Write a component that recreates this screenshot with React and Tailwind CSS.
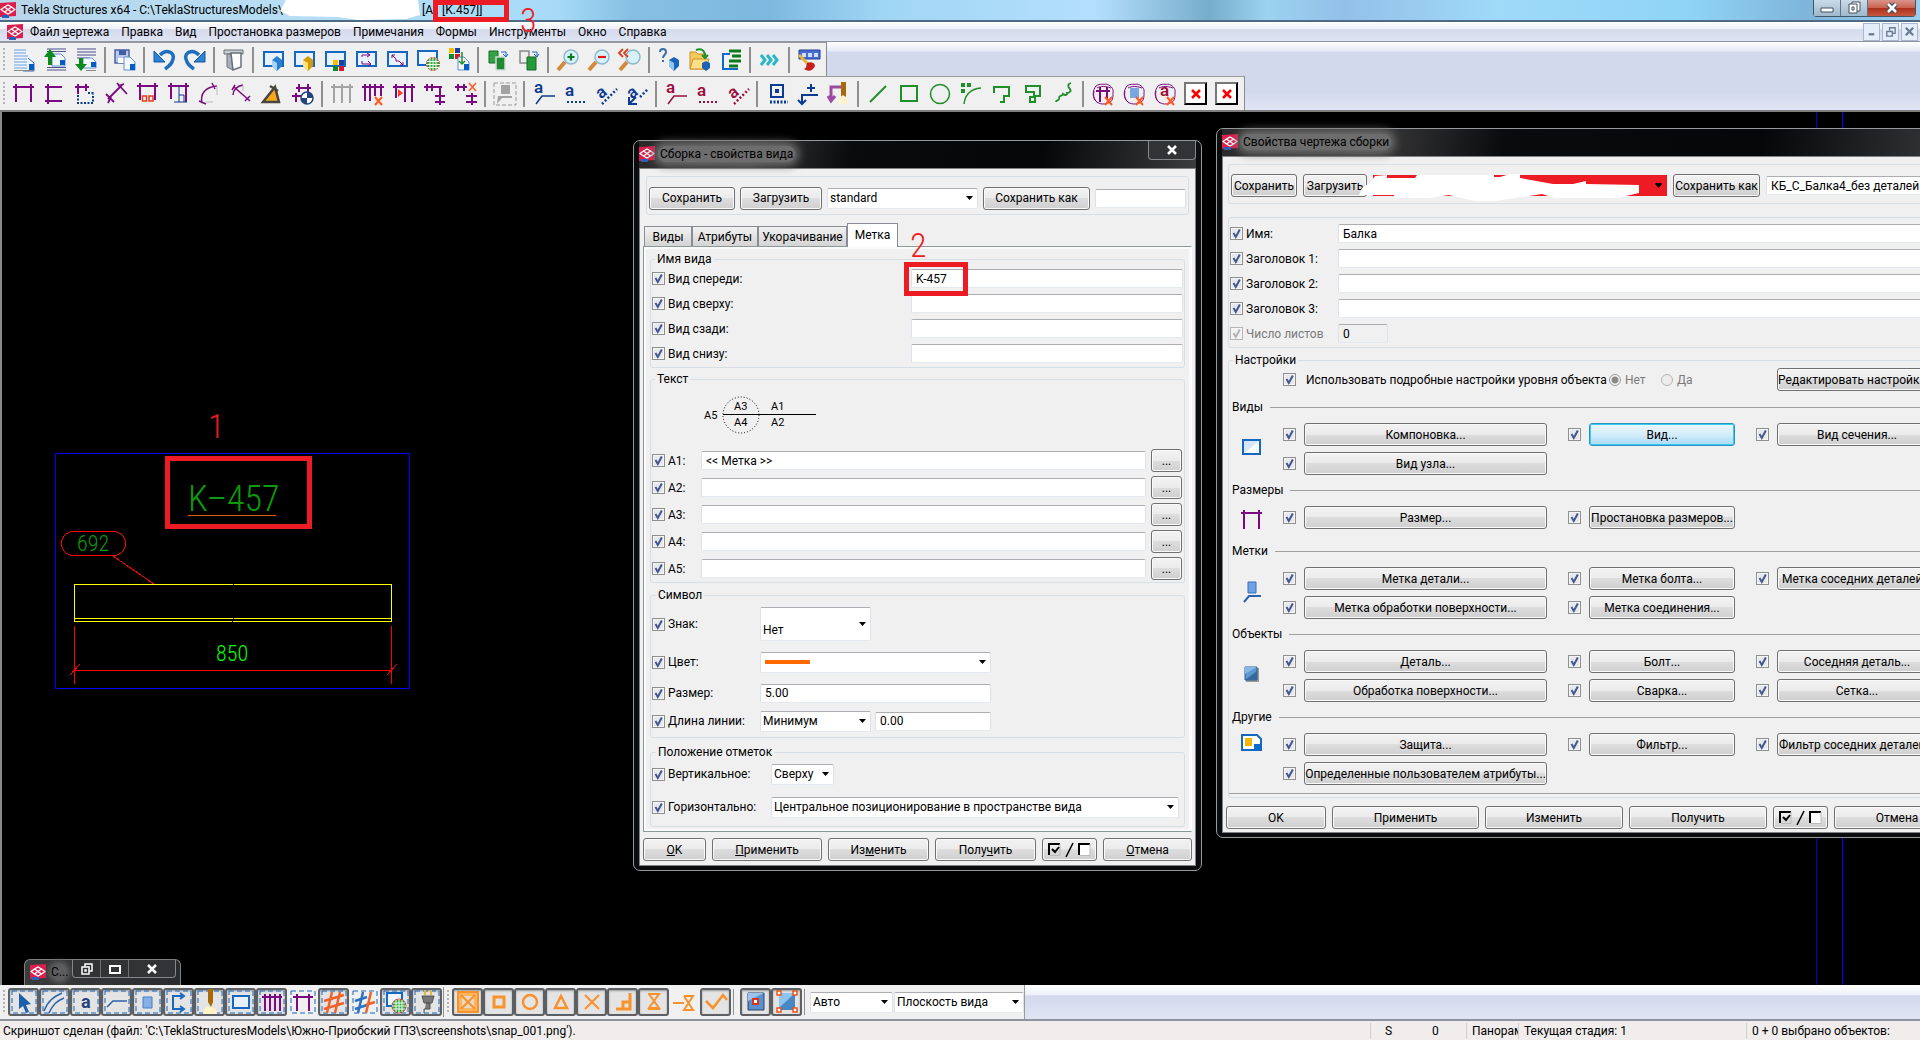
import React from "react";
import clsx from "clsx";

const P = "#7a0a80";
const N = "#0b3c91";
const G = "#1f8f2a";
const M = "#9b0f3c";
const O = "#f7922d";
const B = "#1667c0";

// bits shared by several icons
const corner = <path d="M11 9h6l5 5v8H11z" fill="#f4f8ff" stroke="#5f8fcf" />;
const fold = <path d="M17 16h5v6h-5z" fill="#0a5cc0" />;
const win = <path d="M3 4h19v14H3z" fill="#e8f2ff" stroke={B} strokeWidth="2" />;
const lens = <><path d="M2 22l7-8" stroke="#d38b3b" strokeWidth="4" /><circle cx="15" cy="9" r="7" fill="#d5f1fb" stroke="#8fb8cc" strokeWidth="1.5" /></>;
const cross = <path d="M14 15l7 8M21 15l-7 8" stroke="#ff5a1f" strokeWidth="2" />;
const blob = <path d="M5 4c4-3 8-1 10-2 4 1 8 4 7 9 0 4 0 9-5 10-5 2-10 1-13-3-3-5-2-10 1-14zM6 6c4-2 8-2 14 0M3 9c-1 5 0 9 4 12" stroke={P} />;

const icons = {
  doc: <><path d="M5 2h11l6 8v12H5z" fill="#eef4fd" /><path d="M2 2h12M2 5h12M2 8h14M2 11h13M2 14h13M2 17h13M2 20h13" stroke="#6f9fd8" strokeWidth="1.2" /><path d="M16 10l6 5v8H11" stroke="#3b6fb5" /><path d="M17 16h5v6h-5z" fill="#0a5cc0" /><path d="M2 22.500h20" stroke="#888" /></>,
  docUp: <><path d="M4 1h19M4 3.500h19M4 19.500h19M4 22h19" stroke="#4d4f8f" strokeWidth="1.2" /><path d="M9 6h9l4 4v8H9z" fill="#f4f8ff" stroke="#5f8fcf" /><path d="M17 12h5v5h-5z" fill="#0a5cc0" /><path d="M5 17V9H1l6-8 6 8H9v8z" fill="#0c8a1c" /></>,
  docDown: <><path d="M3 1h19M3 4h19M3 7h19M3 10h12" stroke="#4d4f8f" strokeWidth="1.2" /><path d="M9 10h9l4 4v6H9z" fill="#f4f8ff" stroke="#5f8fcf" /><path d="M17 14h5v5h-5z" fill="#0a5cc0" /><path d="M5 10v6H1l6 7 6-7H9v-6z" fill="#0c8a1c" /><path d="M12 22.500h10" stroke="#888" /></>,
  save: <><path d="M2 2h14v13H2z" fill="#b9c8e8" stroke="#4a62a5" strokeWidth="1.5" /><path d="M6 2h7v5H6z" fill="#3d5fa5" /><path d="M5 10h8v5H5z" fill="#fff" />{corner}{fold}</>,
  undo: <><path d="M8 7c7-7 15-2 13 4-1 5-4 7-8 10" stroke="#1f6dbf" strokeWidth="3.500" /><path d="M2 3v11h11z" fill="#2a84d8" stroke="#1a559a" /></>,
  redo: <><path d="M16 7c-7-7-15-2-13 4 1 5 4 7 8 10" stroke="#1f6dbf" strokeWidth="3.500" /><path d="M22 3v11H11z" fill="#2a84d8" stroke="#1a559a" /></>,
  scroll: <><path d="M2 2h19v4H2z" fill="#c9cdd2" stroke="#68707a" /><path d="M5 6h4l2 16-6-3z" fill="#aab0b8" stroke="#68707a" /><path d="M9 5h10v14l-8 3z" fill="#fff" stroke="#68707a" strokeWidth="1.500" /></>,
  cubeBlue: <>{win}<path d="M11 12l5-4 5 4v6l-5 5-5-5z" fill="#2b7fd0" /><path d="M11 12l5 3v8l-5-5z" fill="#a6d6f6" /></>,
  cubeYellow: <>{win}<path d="M11 12l5-4 5 4v6l-5 5-5-5z" fill="#d89a00" /><path d="M11 12l5 3v8l-5-5z" fill="#ffe47c" /></>,
  winColors: <>{win}<path d="M10 12h5v5h-5z" fill="#f6bf00" /><path d="M16 12h5v5h-5z" fill="#1a3f9a" /><path d="M10 18h5v5h-5z" fill="#0e8a2e" /><path d="M16 18h5v5h-5z" fill="#d4182b" /></>,
  winArrows: <>{win}<path d="M8 9V7h8M8 13v3h9M13 5l3 2-3 2M14 13l3 3-3 2" stroke={P} /></>,
  winDiag: <>{win}<path d="M7 10V7h3M7 7l4 4M11 11v2h3l4 4M18 14v3h-3" stroke={P} /></>,
  winNet: <><path d="M2 3h19v14H2z" fill="#eef5ff" stroke={B} strokeWidth="2" /><circle cx="17" cy="16" r="6.500" fill="#3aa34a" stroke="#c43" /><path d="M11 13.500h12M10 16.500h14M11 19.500h12M14 10v12M17 9v14M20 10v12" stroke="#e8ffe8" /></>,
  colorsDoc: <><path d="M2 0h5v5H2z" fill="#f6bf00" /><path d="M8 0h5v5H8z" fill="#1a3f9a" /><path d="M2 6h5v5H2z" fill="#0e8a2e" /><path d="M8 6h5v5H8z" fill="#d4182b" />{corner}{fold}<path d="M15 4v12M12 13l3 3 3-3" stroke={G} strokeWidth="1.500" /></>,
  copyA: <><path d="M3 3h9v12H3z" fill="#35a047" stroke="#126c20" /><path d="M10 9h9v13h-9z" fill="#1f8a33" stroke="#d5dcd5" strokeWidth="1.500" /><path d="M15 4h5v4M17 6l3 3 2-3" stroke={B} /></>,
  copyB: <><path d="M3 3h9v12H3z" fill="#eee" stroke="#888" strokeWidth="1.500" /><path d="M10 9h9v13h-9z" fill="#279a3a" stroke="#126c20" /><path d="M15 4h5v4M17 6l3 3 2-3" stroke={B} /></>,
  zoomIn: <>{lens}<path d="M15 5.500v7M11.500 9h7" stroke="#0a7a1e" strokeWidth="2.200" /></>,
  zoomOut: <>{lens}<path d="M11 9h8" stroke="#e01818" strokeWidth="2.200" /></>,
  zoomPrev: <>{lens}<path d="M5 1L1 5l4 4M10 1L6 5l4 4" stroke="#e33d1c" strokeWidth="1.800" /></>,
  helpCube: <><path d="M3 4c0-4 6-4 6 0 0 3-3 3-3 6M6 12v2" stroke="#3f6faa" strokeWidth="2" /><path d="M12 12l5-3 5 3v6l-5 5-5-5z" fill="#1c63b8" /><path d="M12 12l5 3v8l-5-5z" fill="#8cc7f2" /></>,
  folder: <><path d="M2 4h6l2 2h8v15H2z" fill="#f5c95a" stroke="#c9912a" /><path d="M5 11h16l-3 10H2z" fill="#ffe08a" stroke="#c9912a" /><path d="M8 2c5-2 9 0 9 6M14 7l3 3 3-3" stroke={G} strokeWidth="2" /><path d="M14 15l4-2 4 2v5l-4 3-4-3z" fill="#1c63b8" /></>,
  list: <><path d="M11 6H4v15h15" stroke="#0a6ad0" strokeWidth="2" /><path d="M10 3h12M13 8h9M10 13h12M10 18h9" stroke="#0c7a1c" strokeWidth="3" /></>,
  more: <path d="M3 7l4 5-4 5M9 7l4 5-4 5M15 7l4 5-4 5" stroke="#2bb5c8" strokeWidth="3" />,
  paint: <><path d="M2 2h21v9H2z" fill="#4a6cd4" stroke="#24409a" /><path d="M5 5h4v4H5zM11 5h4v4h-4zM17 5h4v4h-4z" fill="#cfe0ff" /><path d="M2 7l9 9" stroke="#e7b53c" strokeWidth="3" /><path d="M10 15c4-2 8 0 8 3-2 5-7 6-11 3 3-1 2-4 3-6z" fill="#c81e1e" /></>,

  dimH: <path d="M1 5h21M4 2v18M19 2v18" stroke={P} strokeWidth="2" />,
  dimV: <path d="M5 2v20M2 5h17M2 19h17" stroke={P} strokeWidth="2" />,
  dimOrtho: <><path d="M1 5h14M4 2v10M12 2v7" stroke={P} strokeWidth="2" /><path d="M4 13v8h15v-9M14 11h7" stroke={N} strokeWidth="2" strokeDasharray="2 1.500" /></>,
  dimFree: <path d="M3 17L17 3M1 12l8 8M12 1l10 11M3 21l3-6M13 4l6-2" stroke={P} strokeWidth="1.800" />,
  dimBox: <><path d="M1 4h21M4 1v17M19 1v17" stroke={P} strokeWidth="2" /><path d="M6.500 14h4v5h-4zM13 14h4v5h-4z" stroke="#e33d1c" strokeWidth="1.500" /></>,
  dimPerp: <><path d="M1 4h21M4 1v16M19 1v19" stroke={P} strokeWidth="2" /><path d="M12 4v16M7 20h13M12 13h5v7" stroke={N} /></>,
  arc: <><path d="M4 21C2 12 7 5 19 4M14 1l3 6M1 19l7 3" stroke={P} strokeWidth="1.500" /><path d="M19 4v9M8 20h7" stroke="#bbb" /></>,
  radius: <><path d="M4 13C4 8 8 4 14 3M5 5l16 14M3 8l3-5M16 19l5-5" stroke={P} strokeWidth="1.500" /><path d="M14 3v6" stroke="#bbb" /></>,
  angle: <><path d="M3 20L15 5l4 15z" fill="#f6a81c" stroke="#4a453c" strokeWidth="2.500" /><path d="M10 4l8 5" stroke="#4a453c" strokeWidth="2.500" /></>,
  center: <><path d="M5 6h15M1 14h9M8 2v8M17 2v9M5 11v9" stroke={P} strokeWidth="2" /><circle cx="16" cy="16" r="6" fill="#fff" stroke="#23437f" strokeWidth="1.500" /><path d="M16 10a6 6 0 0 1 6 6h-6zM16 22a6 6 0 0 1-6-6h6z" fill="#23437f" /></>,
  dimGrey: <path d="M1 5h22M4 2v19M12 2v19M20 2v19" stroke="#a3a3a3" strokeWidth="2" />,
  dimDel: <><path d="M1 5h22M4 2v17M9 2v17M14 2v12M20 2v12" stroke={P} strokeWidth="2" />{cross}</>,
  dimIns: <><path d="M1 5h22M4 2v14M13 2v18M20 2v18" stroke={P} strokeWidth="2" /><path d="M6 7l5 4-5 4z" fill="#ff3b1f" /></>,
  dimMerge: <path d="M1 5h18M4 2v7M9 2v7M17 5v18M12 14h10M12 20h10" stroke={P} strokeWidth="2" />,
  dimSplit: <><path d="M1 5h12M4 2v7M10 2v7M18 11v12M12 14h11M12 20h11" stroke={P} strokeWidth="2" /><path d="M15 1l7 8M22 1l-7 8" stroke="#ff5a1f" strokeWidth="1.500" /></>,
  markGrey: <><path d="M1 1h22v22H1z" stroke="#9a9a9a" strokeDasharray="4 2" /><path d="M8 3h9v9H8zM5 14h14v2H9l-5 6z" fill="#a3a3a3" /></>,
  line: <path d="M4 20L20 4" stroke={G} strokeWidth="2" />,
  rect: <path d="M4 4h16v15H4z" stroke={G} strokeWidth="2" />,
  circle: <circle cx="12" cy="12" r="9.500" stroke={G} strokeWidth="1.500" />,
  curve: <><path d="M5 22C6 13 11 7 22 6" stroke={G} strokeWidth="1.500" /><path d="M2 1h4v4H2zM8 1h4v4H8zM2 7h4v4H2z" fill={G} /></>,
  poly: <path d="M4 11V5h15v9h-5v6h-4" stroke={G} strokeWidth="2" />,
  polyClosed: <path d="M5 4h14v10h-5v6H9v-5h4v-5H5z" stroke={G} strokeWidth="2" />,
  cloud: <path d="M19 1c-4 1-3 4-1 6 2 3-2 4-3 4 1 3-3 2-4 1-1 3-4 1-4 4 1 3-3 1-3 4" stroke={G} strokeWidth="1.800" />,
  boxDots: <><path d="M6 3h12v12H6z" stroke={N} strokeWidth="2" /><path d="M10 7h4v4h-4z" fill={N} /><path d="M5 20h18" stroke={N} strokeWidth="3" strokeDasharray="2 1.500" /></>,
  level: <path d="M15 2v8M11 6h8M22 13H6v8M2 18l4 4 4-4" stroke={N} strokeWidth="2" />,
  pencilArrow: <><path d="M4 18V5h10M1 14l3 5 4-5" stroke="#9a4aa0" strokeWidth="3" /><path d="M14 0h5v14l-3 5-2-5z" fill="#a86a08" /><path d="M12 16l4-3 5 4v5h-9z" fill="#fff3cf" /></>,
  cloudDim: <>{blob}<path d="M5 9h14M9 5v15M16 5v12" stroke={P} strokeWidth="2" />{cross}</>,
  cloudMark: <>{blob}<path d="M8 6h9v10H8z" fill="#79a8e0" />{cross}</>,
};

// text symbols with a leader, drawn in a given colour
function TextMark({ color, kind }) {
  const tilted = kind === "rot" || kind === "rotArrow";
  return (
    <>
      {tilted
        ? <text x="4" y="15" fontSize="17" fontWeight="600" fill={color} transform="rotate(-40 9 12)">a</text>
        : <text x={kind === "cloud" ? 7 : 2} y={kind === "leader" ? 11 : 14} fontSize="17" fontWeight="600" fill={color}>a</text>}
      {kind === "leader" && <path d="M4 22l6-8h13" stroke={color} strokeWidth="1.500" />}
      {kind === "dots" && <path d="M4 20h18" stroke={color} strokeWidth="2" strokeDasharray="2 2" />}
      {kind === "rot" && <path d="M8 22L23 7" stroke={color} strokeWidth="2.500" strokeDasharray="2 2" />}
      {kind === "rotArrow" && <><path d="M15 15l8-8" stroke={color} strokeWidth="2.500" strokeDasharray="2 2" /><path d="M4 15v7h8M5 21l6-6" stroke={color} strokeWidth="2" /></>}
      {kind === "cloud" && <>{blob}{cross}</>}
    </>
  );
}

function Icon({ name, className = "size-6" }) {
  let body = icons[name];
  if (!body) {
    const [kind, tone] = name.split(":");
    body = <TextMark kind={kind} color={tone === "m" ? M : N} />;
  }
  return <svg viewBox="0 0 24 24" fill="none" className={clsx("shrink-0 overflow-visible", className)} aria-hidden="true">{body}</svg>;
}

const mainTools = [
  ["doc", "docUp", "docDown"], ["save"], ["undo", "redo"], ["scroll"],
  ["cubeBlue", "cubeYellow", "winColors", "winArrows", "winDiag", "winNet", "colorsDoc"],
  ["copyA", "copyB"], ["zoomIn", "zoomOut", "zoomPrev"], ["helpCube", "folder", "list"], ["more"], ["paint"],
];

const drawTools = [
  ["dimH", "dimV", "dimOrtho", "dimFree", "dimBox", "dimPerp", "arc", "radius", "angle", "center"],
  ["dimGrey", "dimDel", "dimIns", "dimMerge", "dimSplit"], ["markGrey"],
  ["leader:n", "dots:n", "rot:n", "rotArrow:n"], ["leader:m", "dots:m", "rot:m"],
  ["boxDots", "level", "pencilArrow"],
  ["line", "rect", "circle", "curve", "poly", "polyClosed", "cloud"],
  ["cloudDim", "cloudMark", "cloud:m", "close", "close"],
];

function Logo({ className = "size-4" }) {
  return (
    <svg viewBox="0 0 16 16" className={clsx("shrink-0", className)} aria-hidden="true">
      <path d="M0 1l16-1v14l-16 1z" fill="#dc1f4e" />
      <path d="M2 13h7v3H2z" fill="#2d5fb5" />
      <path d="M1 7.500L4.500 5 8 7.500 11.500 5 15 7.500 11.500 10 8 7.500 4.500 10zM4.500 5L8 3l3.500 2L8 7.500zM4.500 10L8 7.500l3.500 2.500L8 12z" fill="none" stroke="#fff" strokeWidth="1.300" />
    </svg>
  );
}

function Grip() {
  return <div className="mx-[3px] h-6 w-[2px] shrink-0 bg-[repeating-linear-gradient(#b5b5b5_0_2px,transparent_2px_4px)]" />;
}

function Toolbar({ groups, label }) {
  return (
    <div role="toolbar" aria-label={label} className="flex h-[34px] w-fit items-center border-t border-r border-t-[#9a9a9a] border-r-[#8a8a8a] bg-[#f0f0f0] pr-[2px]">
      <Grip />
      {groups.map((group, i) => (
        <React.Fragment key={i}>
          {i > 0 && <div className="mx-[3px] h-[26px] w-[2px] bg-[#8f8f8f]" />}
          {group.map((name, j) => (
            <button key={j} type="button" aria-label={name} className="flex h-[30px] w-[31px] items-center justify-center">
              {name === "close" ? (
                <span className="flex size-[23px] items-center justify-center border-2 border-t-[#777] border-r-black border-b-black border-l-[#777] bg-white">
                  <svg viewBox="0 0 10 10" className="size-[10px]"><path d="M1 1l8 8M9 1L1 9" stroke="#f00" strokeWidth="2.500" /></svg>
                </span>
              ) : <Icon name={name} />}
            </button>
          ))}
        </React.Fragment>
      ))}
    </div>
  );
}

function Tick({ label, hideLabel, disabled, className }) {
  return (
    <label className={clsx("flex shrink-0 items-center gap-[3px] whitespace-nowrap", disabled && "text-[#7a7a7a]", className)}>
      <span className="relative size-[13px] shrink-0">
        <input type="checkbox" defaultChecked disabled={disabled} aria-label={hideLabel ? label : undefined}
          className="peer block size-[13px] appearance-none border border-[#8e8f8f] bg-[#e6e8ec] shadow-[inset_0_0_0_1px_#f6f6f6] disabled:border-[#b5b5b5] disabled:bg-[#f2f2f2]" />
        <svg viewBox="0 0 13 13" className="pointer-events-none absolute inset-0 hidden peer-checked:block">
          <path d="M3.500 6l2.300 4L9.800 2.500" fill="none" stroke={disabled ? "#b3b3b3" : "#43578f"} strokeWidth="2" />
        </svg>
      </span>
      {!hideLabel && label}
    </label>
  );
}

function Field({ value = "", label, className, disabled }) {
  return (
    <input type="text" defaultValue={value} aria-label={label} disabled={disabled}
      className={clsx("h-[19px] min-w-0 rounded-[2px] border border-x-[#dde2ea] border-t-[#abadb3] border-b-[#e3e9ef] px-1 leading-4", disabled ? "bg-[#f0f0f0]" : "bg-white", className)} />
  );
}

function Combo({ value, label, className = "h-[21px]", tall, children }) {
  return (
    <div className={clsx("relative shrink-0", className)}>
      <select aria-label={label} className={clsx("block size-full appearance-none rounded-[2px] border border-x-[#dde2ea] border-t-[#abadb3] border-b-[#e3e9ef] bg-white pr-4 pl-[2px] leading-4", tall && "pt-3")}>
        <option>{value}</option>
      </select>
      {children}
      <svg viewBox="0 0 7 4" className="pointer-events-none absolute top-1/2 right-[5px] h-1 w-[7px] -translate-y-1/2"><path d="M0 0h7L3.500 4z" /></svg>
    </div>
  );
}

function Btn({ children, className = "", active }) {
  return (
    <button type="button" className={clsx("flex h-[23px] shrink-0 items-center justify-center overflow-hidden rounded-[3px] border leading-4 whitespace-nowrap",
      active
        ? "border-[#2c92b8] bg-linear-to-b from-[#eaf6fd] via-[#d4edfb] to-[#a9daf3] shadow-[inset_0_0_0_1px_#35cdf8]"
        : "border-[#707070] bg-[linear-gradient(#f2f2f2_0%,#ebebeb_50%,#dddddd_50%,#cfcfcf_100%)] shadow-[inset_0_0_0_1px_#fafafa]", className)}>
      {children}
    </button>
  );
}

function ToggleAll() {
  return (
    <Btn className="h-[20px] w-[55px]">
      <svg viewBox="0 0 44 16" className="h-4 w-[44px]" fill="none" aria-label="Включить или выключить все">
        <path d="M1 13V2h11" stroke="#000" strokeWidth="2" /><path d="M2 13.500h10V2" stroke="#bbb" />
        <path d="M4 7l3 3 4-5" stroke="#000" strokeWidth="2" />
        <path d="M18 15L25 1" stroke="#000" strokeWidth="1.500" />
        <path d="M31 13V2h11" stroke="#000" strokeWidth="2" /><path d="M32 3h10v10H32z" fill="#fff" /><path d="M32 13.500h10V2" stroke="#bbb" />
      </svg>
    </Btn>
  );
}

function Group({ title, className, children }) {
  return (
    <fieldset className={clsx("min-w-0 rounded-[3px] border border-[#d5dfe5]", className)}>
      {title && <legend className="ml-1 px-[2px] leading-4">{title}</legend>}
      {children}
    </fieldset>
  );
}

function DialogFrame({ title, className, children, closeButton }) {
  return (
    <section aria-label={title} className={clsx("absolute rounded-[7px] border border-[#96999c] bg-[#0b0c0e] px-[5px] pb-1", className)}>
      <header className="flex h-[27px] items-start justify-between bg-[linear-gradient(100deg,#2a2a2b_0%,#3a3a3b_20%,#0a0b0d_38%,#050607_72%,#2b2c2e_92%,#3c3d3f_100%)]">
        <div className="flex items-center gap-[3px] pt-[5px]">
          <Logo />
          <h2 className="rounded-full bg-[#6d6d6d] px-[2px] leading-4 text-black shadow-[0_0_8px_4px_#6d6d6d]">{title}</h2>
        </div>
        {closeButton}
      </header>
      <div className="border border-[#808285] bg-[#f0f0f0]">{children}</div>
    </section>
  );
}

function ViewDialog() {
  return (
    <DialogFrame
      title="Сборка - свойства вида"
      className="top-7 left-[633px] w-[569px]"
      closeButton={
        <button type="button" aria-label="Закрыть" className="flex h-[19px] w-12 items-center justify-center rounded-b-[4px] border border-t-0 border-[#85888b] bg-[#323335]">
          <svg viewBox="0 0 12 10" className="h-[10px] w-3"><path d="M2 1l8 8M10 1L2 9" stroke="#fff" strokeWidth="2.500" /></svg>
        </button>
      }
    >
      <Group className="mx-[6px] mt-[7px] flex h-[39px] items-center gap-[5px] px-[2px] pt-[5px]">
        <Btn className="w-[86px]">Сохранить</Btn>
        <Btn className="w-[82px]">Загрузить</Btn>
        <Combo label="Набор свойств" value="standard" className="h-[21px] w-[151px]" />
        <Btn className="w-[107px]">Сохранить как</Btn>
        <Field label="Имя набора" className="flex-1" />
      </Group>

      <div role="tablist" className="mt-2 ml-[4px] flex h-[23px] items-end">
        {[["Виды", "w-12"], ["Атрибуты", "w-[66px]"], ["Укорачивание", "w-[89px]"]].map(([t, w]) => (
          <button key={t} type="button" role="tab" className={clsx("h-[20px] overflow-hidden border border-b-0 border-[#898c95] bg-linear-to-b from-[#f2f2f2] to-[#d4d4d4] leading-4 whitespace-nowrap", w)}>{t}</button>
        ))}
        <button type="button" role="tab" aria-selected="true" className="relative -mb-px h-6 w-[51px] border border-b-0 border-[#898c95] bg-white pb-[2px] leading-4">Метка</button>
      </div>

      <div className="mx-[3px] border border-[#8b9a96] border-r-[#fff] px-[6px] py-1 shadow-[inset_0_0_0_2px_#fafafa]">
        <Group title="Имя вида">
          {["Вид спереди:", "Вид сверху:", "Вид сзади:", "Вид снизу:"].map((t, i) => (
            <div key={t} className="flex h-[25px] items-center justify-between pr-px pb-[2px] pl-px">
              <Tick label={t} />
              <Field label={t} value={i === 0 ? "K-457" : ""} className="w-[272px]" />
            </div>
          ))}
        </Group>

        <Group title="Текст" className="mt-[3px]">
          <svg viewBox="0 0 120 60" className="ml-[52px] block h-[60px] w-[120px] text-[11px]">
            <circle cx="38" cy="28" r="18" fill="none" stroke="#000" strokeDasharray="1 2" />
            <path d="M20 27.500h93" stroke="#000" strokeWidth="1" />
            <text x="1" y="32">A5</text>
            <text x="31" y="23">A3</text><text x="31" y="39">A4</text>
            <text x="68" y="23">A1</text><text x="68" y="39">A2</text>
          </svg>
          {["A1:", "A2:", "A3:", "A4:", "A5:"].map((t, i) => (
            <div key={t} className="flex h-[27px] items-center gap-[5px] pr-[2px] pl-px">
              <Tick label={t} className="w-11" />
              <Field label={t} value={i === 0 ? "<< Метка >>" : ""} className="flex-1" />
              <Btn className="h-[21px] w-[31px]">...</Btn>
            </div>
          ))}
        </Group>

        <Group title="Символ" className="mt-1 pb-[2px] pl-px">
          <div className="flex h-[42px] items-center">
            <Tick label="Знак:" className="w-[108px]" />
            <Combo label="Знак" value="Нет" tall className="h-[34px] w-[111px]" />
          </div>
          <div className="flex h-[34px] items-center">
            <Tick label="Цвет:" className="w-[108px]" />
            <Combo label="Цвет" value="" className="h-[21px] w-[231px]">
              <span className="pointer-events-none absolute top-2 left-[5px] h-1 w-[45px] bg-[#ff6a00]" />
            </Combo>
          </div>
          <div className="flex h-[28px] items-center">
            <Tick label="Размер:" className="w-[108px]" />
            <Field label="Размер" value="5.00" className="w-[231px]" />
          </div>
          <div className="flex h-[28px] items-center">
            <Tick label="Длина линии:" className="w-[108px]" />
            <Combo label="Длина линии" value="Минимум" className="mr-1 h-[21px] w-[111px]" />
            <Field label="Значение длины" value="0.00" className="w-[116px]" />
          </div>
        </Group>

        <Group title="Положение отметок" className="mt-[6px] pl-px">
          <div className="flex h-[28px] items-center">
            <Tick label="Вертикальное:" className="w-[119px]" />
            <Combo label="Вертикальное" value="Сверху" className="h-[21px] w-[63px]" />
          </div>
          <div className="flex h-[38px] items-center">
            <Tick label="Горизонтально:" className="w-[119px]" />
            <Combo label="Горизонтально" value="Центральное позиционирование в пространстве вида" className="h-[21px] w-[408px]" />
          </div>
        </Group>
      </div>

      <div className="flex items-center justify-between px-[3px] pt-[6px] pb-1">
        <Btn className="w-[63px]"><u>O</u>K</Btn>
        <Btn className="w-[110px]"><u>П</u>рименить</Btn>
        <Btn className="w-[101px]">Из<u>м</u>енить</Btn>
        <Btn className="w-[101px]">Полу<u>ч</u>ить</Btn>
        <ToggleAll />
        <Btn className="w-[89px]"><u>О</u>тмена</Btn>
      </div>
    </DialogFrame>
  );
}

const sections = [
  { title: "Виды", icon: "view", rows: [["Компоновка...", "Вид...", "Вид сечения..."], ["Вид узла..."]] },
  { title: "Размеры", icon: "dims", rows: [["Размер...", "Простановка размеров..."]] },
  { title: "Метки", icon: "marks", rows: [["Метка детали...", "Метка болта...", "Метка соседних деталей..."], ["Метка обработки поверхности...", "Метка соединения..."]] },
  { title: "Объекты", icon: "objects", rows: [["Деталь...", "Болт...", "Соседняя деталь..."], ["Обработка поверхности...", "Сварка...", "Сетка..."]] },
  { title: "Другие", icon: "other", top: true, rows: [["Защита...", "Фильтр...", "Фильтр соседних деталей..."], ["Определенные пользователем атрибуты..."]] },
];

const sectionIcons = {
  view: <><path d="M3 4h17v14H3z" fill="#d5e6fa" stroke={B} strokeWidth="2" /><path d="M4 17L19 5v12z" fill="#f8fbff" /></>,
  dims: <path d="M1 5h21M4 2v19M19 2v19" stroke={P} strokeWidth="2" />,
  marks: <><path d="M8 2h8v11H8z" fill="#6fa3e6" stroke="#3c6fb5" /><path d="M4 22l5-6h12" stroke="#2b62ad" strokeWidth="2" /></>,
  objects: <><path d="M6 5h13v14H6z" fill="#999" /><path d="M5 4h12v13H5z" fill="#5d97cf" stroke="#2c5c92" /><path d="M5 4h12L5 11z" fill="#86b8e6" /><path d="M17 8v9H5z" fill="#33699f" /></>,
  other: <><path d="M2 2h15l4 4v11H2z" fill="#fff" stroke={B} strokeWidth="2" /><path d="M5 5h7v8H5z" fill="#f5b800" /><path d="M14 11h7v6h-7z" fill="#0a6ad0" /></>,
};

const colWidths = ["w-[243px]", "w-[146px]", "w-[160px]"];

function DrawingDialog() {
  return (
    <DialogFrame title="Свойства чертежа сборки" className="top-4 left-[1216px] w-[758px]">
      <Group className="mx-[5px] mt-[7px] flex h-[40px] items-center gap-[6px] px-[2px] pt-[3px]">
        <Btn className="w-[66px]">Сохранить</Btn>
        <Btn className="w-[64px]">Загрузить</Btn>
        <div className="relative">
          <Combo label="Набор свойств чертежа" value="" className="h-[21px] w-[294px]">
            <span className="pointer-events-none absolute inset-0 bg-[#ed1c24]" />
          </Combo>
          {/* brush strokes over the set name */}
          <svg viewBox="0 0 290 30" className="pointer-events-none absolute -top-1 -left-[14px] h-[30px] w-[290px]">
            <path d="M0 24l3-7 8-5 5-7 12-1v3h28l2-3h77v2h6l10-3h10v4l33 6h20l13-3v3l53 1v8l-22 5h-62l-13-4-13 2-34 5h-20l-26-6-20 3H35v-3H16z" fill="#fff" />
          </svg>
          <svg viewBox="0 0 7 4" className="pointer-events-none absolute top-2 right-[5px] h-1 w-[7px]"><path d="M0 0h7L3.500 4z" /></svg>
        </div>
        <Btn className="w-[87px]">Сохранить как</Btn>
        <Field label="Имя набора чертежа" value="КБ_С_Балка4_без деталей" className="flex-1" />
      </Group>

      <Group className="mx-[5px] mt-[13px] pt-[3px] pb-px">
        {["Имя:", "Заголовок 1:", "Заголовок 2:", "Заголовок 3:"].map((t, i) => (
          <div key={t} className="flex h-[25px] items-center pl-px">
            <Tick label={t} className="w-[108px]" />
            <Field label={t} value={i === 0 ? "Балка" : ""} className="flex-1" />
          </div>
        ))}
        <div className="flex h-[25px] items-center pl-px">
          <Tick label="Число листов" disabled className="w-[108px]" />
          <Field label="Число листов" value="0" disabled className="w-[50px]" />
        </div>
      </Group>

      <Group title="Настройки" className="mx-[5px] mt-1">
        <div className="flex items-center pb-[5px] pl-[54px]">
          <Tick label="Использовать подробные настройки уровня объекта" className="w-[326px] gap-[10px]" />
          <label className="flex w-[52px] items-center gap-1 text-[#7a7a7a]">
            <input type="radio" name="detail" defaultChecked className="size-3 appearance-none rounded-full border border-[#9a9a9a] bg-[radial-gradient(#8a8a8a_0_3px,#f4f4f4_4px)]" />Нет
          </label>
          <label className="flex w-[116px] items-center gap-1 text-[#7a7a7a]">
            <input type="radio" name="detail" className="size-3 appearance-none rounded-full border border-[#b5b5b5] bg-[#ececec]" />Да
          </label>
          <Btn className="w-[160px]">Редактировать настройки...</Btn>
        </div>
        {sections.map((s) => (
          <section key={s.title} className="pt-[3px] pl-[3px]">
            <h3 className="flex items-center gap-[7px] leading-4">{s.title}<span className="h-px flex-1 bg-[#a0a0a0]" /></h3>
            <div className="flex min-h-[42px] pt-2">
              <div className={clsx("flex w-[51px] pb-[6px] pl-2", s.top ? "items-start" : "items-center")}>
                <svg viewBox="0 0 24 24" fill="none" className="size-6">{sectionIcons[s.icon]}</svg>
              </div>
              <div className="flex flex-col gap-[6px] pb-1">
                {s.rows.map((row, i) => (
                  <div key={i} className="flex items-center gap-[21px]">
                    {row.map((t, j) => (
                      <div key={t} className="flex items-center gap-2">
                        <Tick label={t} hideLabel />
                        <Btn active={t === "Вид..."} className={colWidths[j]}>{t}</Btn>
                      </div>
                    ))}
                  </div>
                ))}
              </div>
            </div>
          </section>
        ))}
        <div className="mt-1 mb-[3px] h-px bg-[#a0a0a0]" />
      </Group>

      <div className="flex items-center gap-[6px] px-[3px] pt-2 pb-[3px]">
        <Btn className="w-[100px]">OK</Btn>
        <Btn className="w-[147px]">Применить</Btn>
        <Btn className="w-[138px]">Изменить</Btn>
        <Btn className="w-[138px]">Получить</Btn>
        <ToggleAll />
        <Btn className="w-[126px]">Отмена</Btn>
      </div>
    </DialogFrame>
  );
}

function Drawing() {
  return (
    <svg viewBox="50 440 370 260" fill="none" className="absolute top-[328px] left-[50px] h-[260px] w-[370px] font-['Liberation_Sans_Narrow','Roboto_Condensed','Roboto',sans-serif] font-light" shapeRendering="crispEdges">
      <path d="M55.500 453.500h354v235h-354z" stroke="#0000ff" />
      <text x="188" y="511" fontSize="36" fill="#0a9c0a">K–457</text>
      <path d="M188 515.500h88" stroke="#e06010" />
      <rect x="61.500" y="531.500" width="64" height="24" rx="12" stroke="#ff0000" />
      <text x="77" y="551" fontSize="22" fill="#0a9c0a">692</text>
      <path d="M113 556l41 28" stroke="#ff0000" />
      <path d="M74.500 584.500h317v37h-317zM74.500 618.500h317" stroke="#ffff00" />
      <path d="M233 584.500h1M233 618.500h1M232 621.500h1" stroke="#000" />
      <path d="M74.500 626v58M391.500 626v58M74.500 670.500h317M70 675l10-11M387 675l10-11" stroke="#ff0000" />
      <text x="216" y="661" fontSize="22" fill="#00ff00">850</text>
    </svg>
  );
}

function MiniWindow() {
  return (
    <div className="absolute bottom-0 left-6 flex h-[26px] w-[157px] items-start gap-[5px] rounded-t-[6px] border border-b-0 border-[#7d8083] bg-linear-to-r from-[#3a3b3d] to-[#2a2b2d] pr-1 pl-[5px]">
      <Logo className="mt-1 size-4" />
      <span className="mt-1 w-4 rounded-full bg-[#5d5d5d] leading-4 text-black shadow-[0_0_5px_3px_#5d5d5d]">С...</span>
      <div className="relative flex h-[18px] flex-1 rounded-b-[4px] border border-t-0 border-[#85888b] bg-[#323335]">
        <button type="button" aria-label="Восстановить" className="flex w-7 items-center justify-center border-r border-[#6d7073]">
          <svg viewBox="0 0 12 12" className="size-3" fill="none" stroke="#fff" strokeWidth="1.500"><path d="M1 4h7v7H1zM4 4V1h7v7H8" /><path d="M4 7h1v1H4z" /></svg>
        </button>
        <button type="button" aria-label="Развернуть" className="flex w-7 items-center justify-center border-r border-[#6d7073]">
          <svg viewBox="0 0 12 10" className="h-[10px] w-3" fill="none" stroke="#fff" strokeWidth="2"><path d="M1 2h10v7H1z" /></svg>
        </button>
        <button type="button" aria-label="Закрыть" className="flex flex-1 items-center justify-center">
          <svg viewBox="0 0 12 10" className="h-[10px] w-3"><path d="M2 1l8 8M10 1L2 9" stroke="#fff" strokeWidth="2.500" /></svg>
        </button>
      </div>
    </div>
  );
}

const dash = <path d="M2 2h24v22H2z" stroke={B} strokeDasharray="5 3" />;
const selectIcons = [
  [<path d="M9 4l12 11-5 1 3 7-3 1-3-7-4 3z" fill="#1d5fae" />],
  [<path d="M3 22C7 12 12 8 21 4M8 24c4-9 8-12 15-15" stroke="#2b62ad" strokeWidth="1.500" />],
  [<text x="9" y="19" fontSize="18" fontWeight="700" fill="#23437f">a</text>],
  [<path d="M4 18l6-6h14" stroke="#2b62ad" strokeWidth="1.500" />],
  [<path d="M9 8h9v11H9z" fill="#86b0e8" stroke="#4b7cc0" />],
  [<path d="M17 7H8v13h9M15 4l4 3-4 3M15 17l4 3-4 3" stroke="#1667c0" strokeWidth="2" />],
  [<><path d="M7 25c0-10 14-10 14 0z" fill="#fff2c4" /><path d="M12 0h5v13l-2 5-3-5z" fill="#a86a08" /></>],
  [<path d="M6 7h16v12H6z" fill="#e6f0ff" stroke={B} strokeWidth="2" />],
  [<path d="M4 8h20M7 5v17M12 5v17M17 5v17M22 5v17" stroke={P} strokeWidth="2" />],
  [<path d="M4 8h20M8 5v17M20 5v17" stroke={P} strokeWidth="2" />, true],
  [<path d="M4 12l20-6M4 20l20-6M12 3L7 24M20 3l-5 21" stroke="#f0622a" strokeWidth="2.500" />],
  [<><path d="M4 12l12-4M4 20l12-4M12 3L7 24" stroke="#2b72c4" strokeWidth="2.500" /><path d="M20 3l-5 21M15 16l9-3" stroke="#f0622a" strokeWidth="2.500" /></>, true],
  [<><path d="M5 4h15v13H5z" fill="#eef5ff" stroke={B} strokeWidth="2" /><circle cx="17" cy="17" r="7" fill="#3aa34a" stroke="#c43" /><path d="M11 14h12M10 17h14M11 20h12M14 11v12M17 10v14M20 11v12" stroke="#e8ffe8" /></>],
  [<><path d="M9 7h12l-2 7h-8zM13 14h4v6h-6v4" fill="#777" stroke="#555" /><path d="M12 1v5M18 1v5" stroke="#e8b92a" strokeWidth="2" /></>],
];

const snapIcons = [
  [<><path d="M4 3h20v20H4z" fill="#ffb45c" stroke={O} strokeWidth="2" /><path d="M8 7h12v12H8z" fill="#e8d8c4" /><path d="M7 6l14 14M21 6L7 20" stroke={O} strokeWidth="2" /></>],
  [<path d="M9 8h10v10H9z" stroke={O} strokeWidth="3" />],
  [<circle cx="14" cy="13" r="7" stroke={O} strokeWidth="2.500" />],
  [<path d="M14 7l6 12H8z" stroke={O} strokeWidth="2.500" />],
  [<path d="M7 6l14 14M21 6L7 20" stroke={O} strokeWidth="2" />],
  [<path d="M7 20h14V4M14 20v-7h7" stroke={O} strokeWidth="3" />],
  [<path d="M9 5h10L9 19h10L9 5M8 5h12M8 20h12" stroke={O} strokeWidth="2" />],
  [<path d="M13 7h9l-9 14h9L13 7M2 14h11" stroke={O} strokeWidth="2" />, true],
  [<path d="M4 12l7 7L21 6l4 5" stroke={O} strokeWidth="2.500" />],
];

const depthIcons = [
  [<><path d="M6 4h16v17H6z" fill="#5a8fd0" stroke="#27466f" /><path d="M6 4h16L6 12z" fill="#9cc3ee" /><path d="M11 10h5v5h-5z" fill="#fff" stroke="#d8391b" strokeWidth="2" /></>],
  [<><path d="M6 4h16v17H6z" fill="#4b86c4" /><path d="M6 4h16L6 19z" fill="#8fc4ee" /><path d="M4 2h4v4H4zM20 2h4v4h-4zM4 19h4v4H4zM20 19h4v4h-4z" fill="#fff" stroke="#e8551b" strokeWidth="1.500" /></>],
];

function SwitchBar({ items, frame, label }) {
  return (
    <div className="flex" role="group" aria-label={label}>
      {items.map(([art, flat], i) => (
        <button key={i} type="button" aria-label={`${label} ${i + 1}`}
          className={clsx("flex h-[28px] w-[31px] items-center justify-center rounded-[3px]", !flat && "border-2 border-[#5c5f63] bg-[#e4e4e4] shadow-[inset_0_1px_2px_#999]")}>
          <svg viewBox="0 0 28 26" fill="none" className="h-[26px] w-7 shrink-0">{frame}{art}</svg>
        </button>
      ))}
    </div>
  );
}

const menus = ["Правка", "Вид", "Простановка размеров", "Примечания", "Формы", "Инструменты", "Окно", "Справка"];

export default function App() {
  return (
    <div className="flex h-screen flex-col overflow-hidden bg-[#f0f0f0] font-['Roboto','Noto_Sans',sans-serif] text-[12px] text-black">
      <header className="relative shrink-0">
        <div className="flex h-[22px] items-start justify-between overflow-hidden border-b-2 border-[#4d6a86] bg-[linear-gradient(90deg,#b9d6ea_0%,#b5def5_15%,#a6dbf8_29%,#86bfe2_33%,#7db8e0_40%,#a0d6f5_46%,#b4dffc_57%,#76adcc_63%,#9bd3f0_66%,#93c0e8_70%,#9fdaf8_78%,#8fd4f6_88%,#7fb5da_94%,#9ccfee_100%)]">
          <div className="flex h-5 items-center">
            <Logo className="mr-[5px] size-4" />
            <h1 className="w-[259px] leading-4 whitespace-nowrap">Tekla Structures x64 - C:\TeklaStructuresModels\</h1>
            <svg viewBox="0 0 140 20" className="h-5 w-[140px]"><path d="M6 0h132l2 15-14 4-48 1-20-3-48-1-10-5z" fill="#fff" /></svg>
            <span className="w-[22px] pl-[2px] leading-4">[А</span>
            <span className="leading-4">[K.457]]</span>
          </div>
          <div className="mr-1 flex h-[17px] rounded-b-[4px] border border-t-0 border-[#40566b]">
            <button type="button" aria-label="Свернуть" className="flex w-[27px] items-center justify-center border-r border-[#5d7489] bg-linear-to-b from-[#c9dbe8] to-[#9fb8ca]">
              <svg viewBox="0 0 14 6" className="mt-1 h-[6px] w-[14px]"><path d="M1 1h12v4H1z" fill="#fff" stroke="#44505c" /></svg>
            </button>
            <button type="button" aria-label="Восстановить" className="flex w-[27px] items-center justify-center border-r border-[#5d7489] bg-linear-to-b from-[#c9dbe8] to-[#9fb8ca]">
              <svg viewBox="0 0 14 14" className="size-[14px]" fill="#fff" stroke="#44505c"><path d="M5 1h8v9H5z" /><path d="M2 3h8v9H2zM5 6h2v3H5z" /></svg>
            </button>
            <button type="button" aria-label="Закрыть" className="flex w-[47px] items-center justify-center bg-[linear-gradient(#d9958a_0%,#c9614f_50%,#ab2f1b_50%,#c8573f_100%)]">
              <svg viewBox="0 0 14 12" className="h-3 w-[14px]"><path d="M3 2l8 8M11 2l-8 8" stroke="#44505c" strokeWidth="5" /><path d="M3 2l8 8M11 2l-8 8" stroke="#fff" strokeWidth="2.500" /></svg>
            </button>
          </div>
        </div>

        <nav className="flex h-[20px] items-center border-b border-[#8f94a3] bg-[linear-gradient(#ffffff_0%,#eef1f9_35%,#d5daec_40%,#e0e5f5_100%)]">
          <Logo className="mr-px ml-[7px] size-4" />
          <a href="#file" className="px-[6px] leading-4">Файл <u>ч</u>ертежа</a>
          {menus.map((m) => <a key={m} href="#menu" className="px-[6px] leading-4">{m}</a>)}
          <div className="ml-auto flex gap-[2px] pr-[2px]">
            {["M4 10h6", "M3 7h6v5H3zM6 6V3h6v6h-3", "M3 3l8 8M11 3l-8 8"].map((d, i) => (
              <button key={d} type="button" aria-label={["Свернуть чертеж", "Восстановить чертеж", "Закрыть чертеж"][i]} className="flex h-[18px] w-[17px] items-center justify-center border border-[#a9b6cc] bg-[#e4eefa]">
                <svg viewBox="0 0 14 14" className="size-[13px]" fill="none" stroke="#6c7c94" strokeWidth={i === 1 ? 1.5 : 2.5}><path d={d} /></svg>
              </button>
            ))}
          </div>
        </nav>

        <div className="border-b-2 border-[#7e7e7e] bg-[linear-gradient(#ffffff_0px,#e6eaf5_9px,#d3d9ec_10px,#d3d9ec_50px,#e0e5f5_100%)]">
          <Toolbar groups={mainTools} label="Основные инструменты" />
          <Toolbar groups={drawTools} label="Инструменты чертежа" />
        </div>

        <div className="absolute top-0 left-[433px] h-[22px] w-[76px] border-5 border-[#ed1c24]" />
        <span className="absolute top-0 left-[520px] font-['Liberation_Sans_Narrow','Roboto_Condensed','Roboto',sans-serif] text-[34px] leading-10 font-light text-[#ed1c24]">3</span>
      </header>

      <main className="relative min-h-0 flex-1 overflow-hidden border-l-2 border-[#8a8a8a] bg-black">
        <div className="absolute -left-[2px] size-full">
          <div className="absolute inset-y-0 left-[1816px] w-px bg-[#0000c8]" />
          <div className="absolute inset-y-0 left-[1842px] w-px bg-[#0000ff]" />
          <Drawing />
          <ViewDialog />
          <DrawingDialog />
          <MiniWindow />
          <div className="absolute top-[344px] left-[165px] h-[73px] w-[147px] border-5 border-[#ed1c24]" />
          <div className="absolute top-[150px] left-[904px] h-[34px] w-16 border-5 border-[#ed1c24]" />
          <span className="absolute top-[294px] left-[208px] font-['Liberation_Sans_Narrow','Roboto_Condensed','Roboto',sans-serif] text-[34px] leading-10 font-light text-[#ed1c24]">1</span>
          <span className="absolute top-[113px] left-[910px] font-['Liberation_Sans_Narrow','Roboto_Condensed','Roboto',sans-serif] text-[34px] leading-10 font-light text-[#ed1c24]">2</span>
        </div>
      </main>

      <div className="shrink-0 border-b-2 border-[#8f939e] bg-[linear-gradient(#ffffff_0%,#eef1f9_28%,#d3d9ec_32%,#e0e5f5_100%)]">
        <div role="toolbar" aria-label="Выбор и привязка" className="flex h-[34px] w-fit items-center border-r border-[#9a9a9a] bg-[#f0f0f0]">
          <Grip />
          <SwitchBar items={selectIcons} frame={dash} label="Выбор" />
          <div className="ml-px h-[30px] w-px bg-[#8f8f8f]" />
          <Grip />
          <SwitchBar items={snapIcons} label="Привязка" />
          <div className="mr-[6px] ml-[2px] h-[26px] w-px bg-[#8f8f8f]" />
          <SwitchBar items={depthIcons} label="Точки" />
          <div className="mr-[5px] ml-[2px] h-[26px] w-px bg-[#8f8f8f]" />
          <Combo label="Режим" value="Авто" className="mr-px h-[21px] w-[83px]" />
          <Combo label="Плоскость" value="Плоскость вида" className="h-[21px] w-[130px]" />
        </div>
      </div>

      <footer className="flex h-[19px] shrink-0 items-center bg-[#f0edec] leading-4">
        <span className="flex-1 pl-[3px]">Скриншот сделан (файл: 'C:\TeklaStructuresModels\Южно-Приобский ГПЗ\screenshots\snap_001.png').</span>
        <span className="w-12 border-l border-[#cfcfcf] pl-[14px]">S</span>
        <span className="w-12 pl-[14px]">0</span>
        <span className="w-[52px] overflow-hidden border-l border-[#cfcfcf] pl-[5px]">Панорама</span>
        <span className="w-[228px] border-l border-[#cfcfcf] pl-[5px]">Текущая стадия: 1</span>
        <span className="w-[174px] border-l border-[#cfcfcf] pl-[5px]">0 + 0 выбрано объектов:</span>
      </footer>
    </div>
  );
}
